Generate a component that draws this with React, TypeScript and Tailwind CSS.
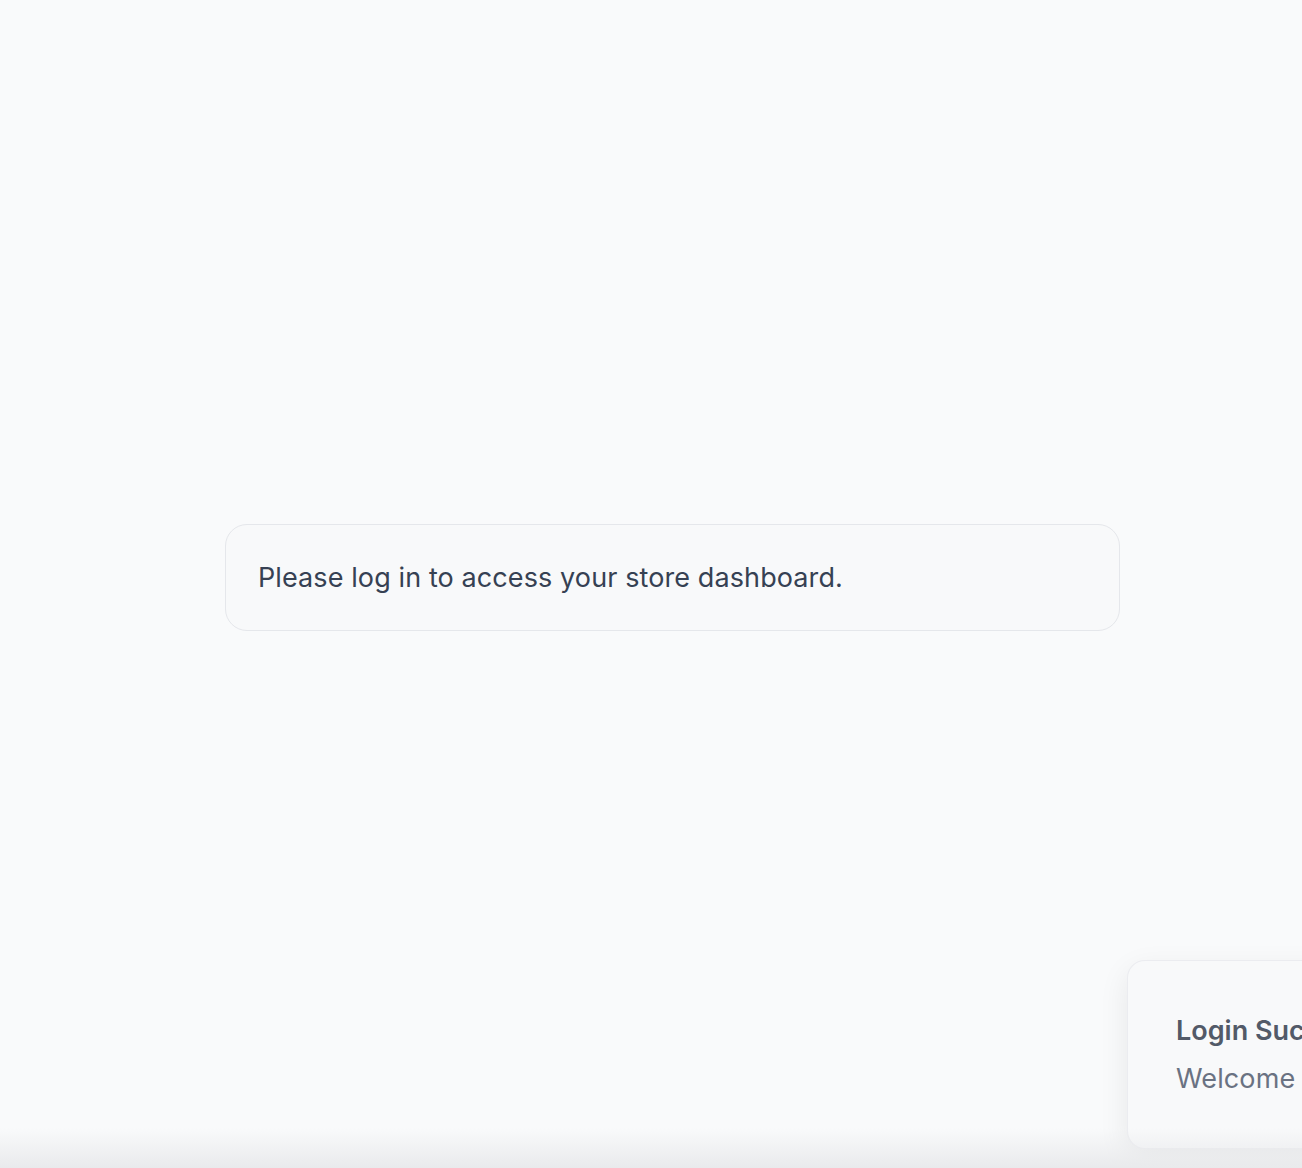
export default function App() {
  return (
    <div className="relative min-h-screen overflow-hidden bg-gray-50 font-['Inter','Liberation_Sans',sans-serif]">
      <main className="pt-[524px] pl-[225px]">
        <div className="w-[895px] rounded-[22px] border border-gray-200 bg-[#f8f9fa] px-8 pt-[35px] pb-[34px]">
          <p className="text-[27px] leading-9 tracking-[0.1px] text-gray-700">Please log in to access your store dashboard.</p>
        </div>
      </main>

      {/* toast, partly off screen on the right */}
      <div className="absolute left-[1127px] top-[960px] w-[420px] rounded-[18px] border border-gray-200/70 bg-[#f8f9fa] px-12 pt-[54px] pb-[53px] shadow-[0_10px_30px_rgba(0,0,0,0.08)]">
        <div className="whitespace-nowrap text-[27px] font-semibold leading-8 text-[#525a68]">Login Successful</div>
        <div className="mt-4 whitespace-nowrap text-[27px] leading-8 tracking-[0.1px] text-gray-500">Welcome back!</div>
      </div>

      <div className="pointer-events-none absolute bottom-0 left-0 right-0 h-10 bg-gradient-to-b from-transparent to-[#e9eaec]" />
    </div>
  );
}
